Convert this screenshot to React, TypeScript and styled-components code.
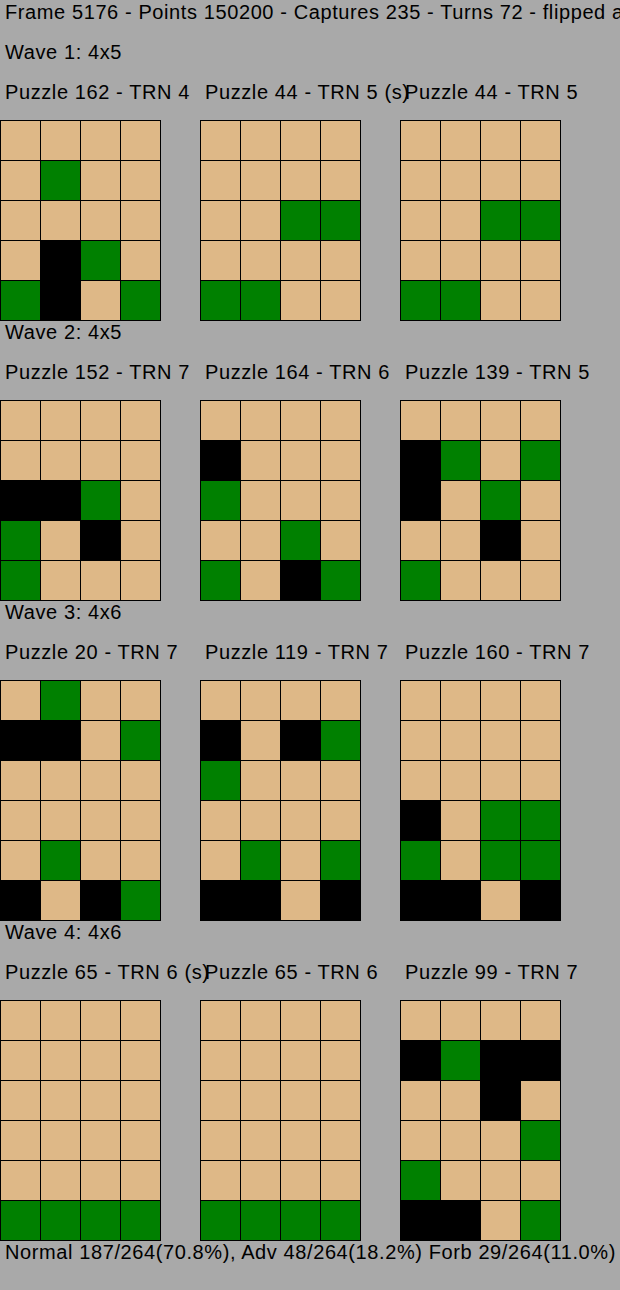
import React from 'react';
import styled, { createGlobalStyle } from 'styled-components';

type Cell = 'T' | 'G' | 'B';

interface Puzzle {
  title: string;
  rows: string[];
}

interface Wave {
  label: string;
  puzzles: Puzzle[];
}

const waves: Wave[] = [
  {
    label: 'Wave 1: 4x5',
    puzzles: [
      { title: 'Puzzle 162 - TRN 4', rows: ['TTTT', 'TGTT', 'TTTT', 'TBGT', 'GBTG'] },
      { title: 'Puzzle 44 - TRN 5 (s)', rows: ['TTTT', 'TTTT', 'TTGG', 'TTTT', 'GGTT'] },
      { title: 'Puzzle 44 - TRN 5', rows: ['TTTT', 'TTTT', 'TTGG', 'TTTT', 'GGTT'] },
    ],
  },
  {
    label: 'Wave 2: 4x5',
    puzzles: [
      { title: 'Puzzle 152 - TRN 7', rows: ['TTTT', 'TTTT', 'BBGT', 'GTBT', 'GTTT'] },
      { title: 'Puzzle 164 - TRN 6', rows: ['TTTT', 'BTTT', 'GTTT', 'TTGT', 'GTBG'] },
      { title: 'Puzzle 139 - TRN 5', rows: ['TTTT', 'BGTG', 'BTGT', 'TTBT', 'GTTT'] },
    ],
  },
  {
    label: 'Wave 3: 4x6',
    puzzles: [
      { title: 'Puzzle 20 - TRN 7', rows: ['TGTT', 'BBTG', 'TTTT', 'TTTT', 'TGTT', 'BTBG'] },
      { title: 'Puzzle 119 - TRN 7', rows: ['TTTT', 'BTBG', 'GTTT', 'TTTT', 'TGTG', 'BBTB'] },
      { title: 'Puzzle 160 - TRN 7', rows: ['TTTT', 'TTTT', 'TTTT', 'BTGG', 'GTGG', 'BBTB'] },
    ],
  },
  {
    label: 'Wave 4: 4x6',
    puzzles: [
      { title: 'Puzzle 65 - TRN 6 (s)', rows: ['TTTT', 'TTTT', 'TTTT', 'TTTT', 'TTTT', 'GGGG'] },
      { title: 'Puzzle 65 - TRN 6', rows: ['TTTT', 'TTTT', 'TTTT', 'TTTT', 'TTTT', 'GGGG'] },
      { title: 'Puzzle 99 - TRN 7', rows: ['TTTT', 'BGBB', 'TTBT', 'TTTG', 'GTTT', 'BBTG'] },
    ],
  },
];

const cellColors: Record<Cell, string> = {
  T: '#deb887',
  G: '#008000',
  B: '#000000',
};

const GlobalStyle = createGlobalStyle`
  html, body {
    margin: 0;
    padding: 0;
    background: #a9a9a9;
    overflow: hidden;
  }
  body {
    font-family: "Liberation Sans", Arial, sans-serif;
    font-size: 20px;
    letter-spacing: 0.6px;
    color: #000;
  }
`;

const Page = styled.div`
  width: 620px;
  overflow: hidden;
  display: flex;
  flex-direction: column;
`;

const TextRow = styled.div`
  height: 40px;
  line-height: 24px;
  padding-left: 5px;
  white-space: nowrap;
`;

const Columns = styled.div<{ $height: number }>`
  display: grid;
  grid-template-columns: repeat(3, 200px);
  height: ${({ $height }) => $height}px;
`;

const Title = styled.div`
  line-height: 24px;
  padding-left: 5px;
  white-space: nowrap;
`;

const Board = styled.div`
  display: grid;
  grid-template-columns: repeat(4, 39px);
  grid-auto-rows: 39px;
  gap: 1px;
  padding: 1px;
  background: #000;
  width: max-content;
  align-self: start;
`;

const Square = styled.div<{ $kind: Cell }>`
  background: ${({ $kind }) => cellColors[$kind]};
`;

const WaveBlock: React.FC<{ wave: Wave }> = ({ wave }) => {
  const rowCount = wave.puzzles[0].rows.length;
  return (
    <>
      <TextRow>{wave.label}</TextRow>
      <Columns $height={40}>
        {wave.puzzles.map((p, i) => (
          <Title key={i}>{p.title}</Title>
        ))}
      </Columns>
      <Columns $height={rowCount * 40}>
        {wave.puzzles.map((p, i) => (
          <Board key={i}>
            {p.rows.flatMap((row, r) =>
              row.split('').map((c, k) => <Square key={`${r}-${k}`} $kind={c as Cell} />)
            )}
          </Board>
        ))}
      </Columns>
    </>
  );
};

const App: React.FC = () => {
  return (
    <Page>
      <GlobalStyle />
      <TextRow>Frame 5176 - Points 150200 - Captures 235 - Turns 72 - flipped all</TextRow>
      {waves.map((w, i) => (
        <WaveBlock key={i} wave={w} />
      ))}
      <TextRow>Normal 187/264(70.8%), Adv 48/264(18.2%) Forb 29/264(11.0%)</TextRow>
    </Page>
  );
};

export default App;
